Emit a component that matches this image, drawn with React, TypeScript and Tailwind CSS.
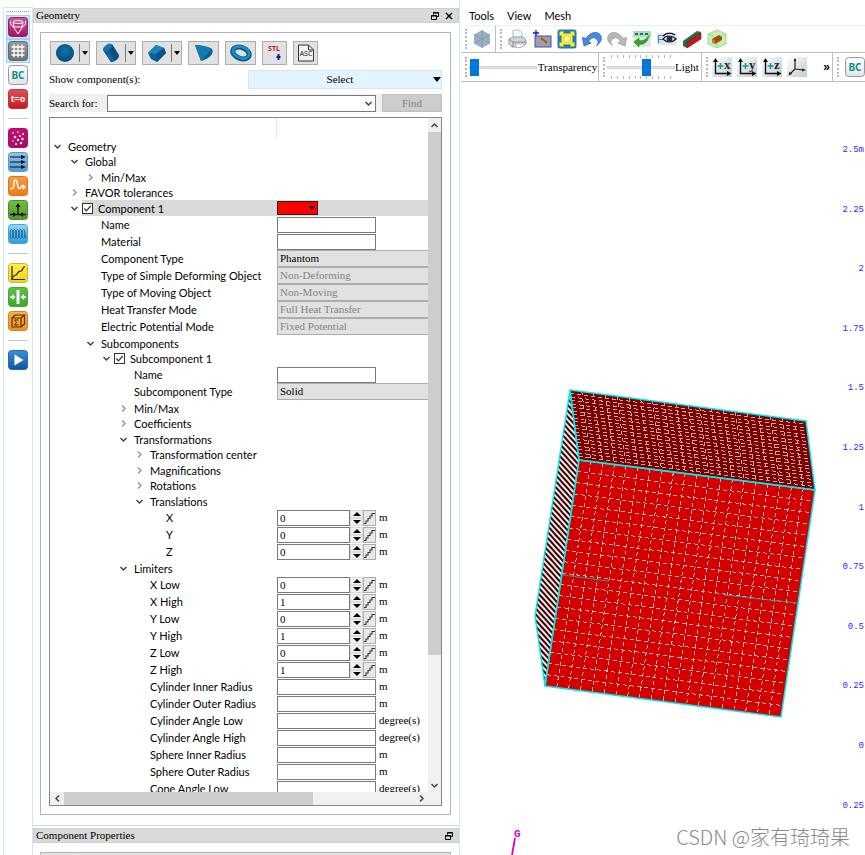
import { Fragment, type ReactNode } from "react";

type Editor = "text" | "combo" | "spin" | "color";

interface TreeRow {
  label: string;
  level: number;
  size: string;
  open?: boolean;
  checkbox?: boolean;
  selected?: boolean;
  editor?: Editor;
  value?: string;
  unit?: string;
  disabled?: boolean;
}

// left edge of the expander for each depth
const INDENT = ["pl-[3px]", "pl-[20px]", "pl-[36px]", "pl-[52px]", "pl-[69px]", "pl-[85px]", "pl-[101px]"];

const A = "h-[15px]";
const B = "h-[16px]";
const E = "h-[17px]";

const rows: TreeRow[] = [
  { label: "Geometry", level: 0, size: B, open: true },
  { label: "Global", level: 1, size: A, open: true },
  { label: "Min/Max", level: 2, size: B, open: false },
  { label: "FAVOR tolerances", level: 1, size: A, open: false },
  { label: "Component 1", level: 1, size: B, open: true, checkbox: true, selected: true, editor: "color" },
  { label: "Name", level: 2, size: E, editor: "text" },
  { label: "Material", level: 2, size: E, editor: "text" },
  { label: "Component Type", level: 2, size: E, editor: "combo", value: "Phantom" },
  { label: "Type of Simple Deforming Object", level: 2, size: E, editor: "combo", value: "Non-Deforming", disabled: true },
  { label: "Type of Moving Object", level: 2, size: E, editor: "combo", value: "Non-Moving", disabled: true },
  { label: "Heat Transfer Mode", level: 2, size: E, editor: "combo", value: "Full Heat Transfer", disabled: true },
  { label: "Electric Potential Mode", level: 2, size: E, editor: "combo", value: "Fixed Potential", disabled: true },
  { label: "Subcomponents", level: 2, size: B, open: true },
  { label: "Subcomponent 1", level: 3, size: A, open: true, checkbox: true },
  { label: "Name", level: 4, size: E, editor: "text" },
  { label: "Subcomponent Type", level: 4, size: E, editor: "combo", value: "Solid" },
  { label: "Min/Max", level: 4, size: B, open: false },
  { label: "Coefficients", level: 4, size: A, open: false },
  { label: "Transformations", level: 4, size: B, open: true },
  { label: "Transformation center", level: 5, size: A, open: false },
  { label: "Magnifications", level: 5, size: B, open: false },
  { label: "Rotations", level: 5, size: A, open: false },
  { label: "Translations", level: 5, size: B, open: true },
  { label: "X", level: 6, size: E, editor: "spin", value: "0", unit: "m" },
  { label: "Y", level: 6, size: E, editor: "spin", value: "0", unit: "m" },
  { label: "Z", level: 6, size: E, editor: "spin", value: "0", unit: "m" },
  { label: "Limiters", level: 4, size: B, open: true },
  { label: "X Low", level: 5, size: E, editor: "spin", value: "0", unit: "m" },
  { label: "X High", level: 5, size: E, editor: "spin", value: "1", unit: "m" },
  { label: "Y Low", level: 5, size: E, editor: "spin", value: "0", unit: "m" },
  { label: "Y High", level: 5, size: E, editor: "spin", value: "1", unit: "m" },
  { label: "Z Low", level: 5, size: E, editor: "spin", value: "0", unit: "m" },
  { label: "Z High", level: 5, size: E, editor: "spin", value: "1", unit: "m" },
  { label: "Cylinder Inner Radius", level: 5, size: E, editor: "text", unit: "m" },
  { label: "Cylinder Outer Radius", level: 5, size: E, editor: "text", unit: "m" },
  { label: "Cylinder Angle Low", level: 5, size: E, editor: "text", unit: "degree(s)" },
  { label: "Cylinder Angle High", level: 5, size: E, editor: "text", unit: "degree(s)" },
  { label: "Sphere Inner Radius", level: 5, size: E, editor: "text", unit: "m" },
  { label: "Sphere Outer Radius", level: 5, size: E, editor: "text", unit: "m" },
  { label: "Cone Angle Low", level: 5, size: E, editor: "text", unit: "degree(s)" },
];

const SERIF = "font-['Liberation_Serif','Noto_Sans_CJK_SC',serif] text-[11px]";

function Chevron({ dir, className = "text-[#444]" }: { dir: "up" | "down" | "left" | "right"; className?: string }) {
  const d = {
    up: "M1.5 6 4.5 3l3 3",
    down: "M1.5 3 4.5 6l3-3",
    left: "M6 1.5 3 4.5l3 3",
    right: "M3 1.5 6 4.5l-3 3",
  }[dir];
  return (
    <svg viewBox="0 0 9 9" className={`h-[9px] w-[9px] shrink-0 ${className}`} fill="none" stroke="currentColor" strokeWidth="1.5">
      <path d={d} />
    </svg>
  );
}

function Caret({ className = "" }: { className?: string }) {
  return (
    <svg viewBox="0 0 8 5" className={`h-[5px] w-2 shrink-0 ${className}`}>
      <path d="M0 0h8L4 5z" />
    </svg>
  );
}

function CheckBox({ id }: { id: string }) {
  return (
    <span className="relative h-[11px] w-[11px] shrink-0">
      <input id={id} type="checkbox" defaultChecked className="block h-[11px] w-[11px] appearance-none border border-[#333] bg-white" />
      <svg viewBox="0 0 11 11" className="pointer-events-none absolute inset-0" fill="none" stroke="#333" strokeWidth="1.2">
        <path d="M2.3 5.5l2.2 2.3 4.2-4.8" />
      </svg>
    </span>
  );
}

function RowEditor({ row, id }: { row: TreeRow; id: string }) {
  if (row.editor === "color") {
    return (
      <button aria-label="Component color" className="flex h-[14px] w-[41px] items-center justify-end border border-[#222] bg-[#ff0000] pr-0.5">
        <svg viewBox="0 0 6 4" className="h-1 w-1.5">
          <path d="M0 0h6L3 4z" />
        </svg>
      </button>
    );
  }
  if (row.editor === "combo") {
    return (
      <select
        id={id}
        disabled={row.disabled}
        className="h-[17px] w-full appearance-none border-y border-l border-[#adadad] bg-[#e1e1e1] pl-0.5 text-black opacity-100 disabled:text-[#838383]"
      >
        <option>{row.value}</option>
      </select>
    );
  }
  if (row.editor === "spin") {
    return (
      <>
        <input id={id} defaultValue={row.value} className="h-4 w-[73px] border border-[#7a7a7a] bg-white px-0.5" />
        <span className="flex h-4 w-[13px] flex-col bg-[#f0f0f0]">
          <button aria-label={`${row.label} up`} className="flex flex-1 items-center justify-center border border-[#dcdcdc]">
            <svg viewBox="0 0 8 4" className="h-1 w-2"><path d="M0 4h8L4 0z" /></svg>
          </button>
          <button aria-label={`${row.label} down`} className="flex flex-1 items-center justify-center border border-[#dcdcdc]">
            <svg viewBox="0 0 8 4" className="h-1 w-2"><path d="M0 0h8L4 4z" /></svg>
          </button>
        </span>
        <button aria-label={`${row.label} step`} className="h-4 w-[13px] border border-[#adadad] bg-[#e8e8e8]">
          <svg viewBox="0 0 11 14" className="h-3.5 w-[11px]" fill="none" stroke="#333" strokeWidth="1.1">
            <path d="M0 12.5h2v-2.500h2v-2.500h2v-2.500h2v-2.500h3" />
          </svg>
        </button>
        <span className="ml-[3px]">{row.unit}</span>
      </>
    );
  }
  if (row.editor === "text") {
    return (
      <>
        <input id={id} className="h-4 w-[99px] border border-[#7a7a7a] bg-white px-0.5" />
        <span className="ml-[3px]">{row.unit}</span>
      </>
    );
  }
  return null;
}

function Tree() {
  return (
    <ul className="min-w-0 flex-1">
      {rows.map((row, i) => {
        const id = `row-${i}`;
        const bg = row.selected ? "bg-[#d9d9d9]" : "";
        return (
          <li key={id} className={`flex ${row.size}`}>
            <div className={`flex w-[227px] shrink-0 items-center ${INDENT[row.level]}`}>
              {row.open === undefined ? (
                <span className="w-[9px] shrink-0" />
              ) : (
                <Chevron dir={row.open ? "down" : "right"} className={row.open ? "text-[#444]" : "text-[#999]"} />
              )}
              <div className={`ml-[3px] flex h-full flex-1 items-center ${bg}`}>
                {row.checkbox && <CheckBox id={`${id}-on`} />}
                <label
                  htmlFor={row.checkbox ? `${id}-on` : id}
                  className={`whitespace-nowrap ${row.checkbox ? "pl-[5px]" : "pl-[3px]"}`}
                >
                  {row.label}
                </label>
              </div>
            </div>
            <div className={`flex min-w-0 flex-1 items-center ${SERIF} ${bg}`}>
              <RowEditor row={row} id={id} />
            </div>
          </li>
        );
      })}
    </ul>
  );
}

/* ---------- left tool strip ---------- */

function Tile({ from, to, edge, children }: { from: string; to: string; edge: string; children?: ReactNode }) {
  const id = `g${from.slice(1)}${to.slice(1)}`;
  return (
    <svg viewBox="0 0 20 20" className="h-5 w-5">
      <defs>
        <linearGradient id={id} x1="0" y1="0" x2="0" y2="1">
          <stop offset="0" stopColor={from} />
          <stop offset="1" stopColor={to} />
        </linearGradient>
      </defs>
      <rect x="0.5" y="0.5" width="19" height="19" rx="3" fill={`url(#${id})`} stroke={edge} />
      {children}
    </svg>
  );
}

function BcTile() {
  return (
    <Tile from="#ffffff" to="#e2e2e2" edge="#9a9a9a">
      <text x="10" y="14" textAnchor="middle" fontFamily="'Noto Sans', sans-serif" fontSize="10" fontWeight="700" fill="#0f8f8c">BC</text>
    </Tile>
  );
}

const stripGroups: { name: string; active?: boolean; icon: ReactNode }[][] = [
  [
    {
      name: "Geometry",
      active: true,
      icon: (
        <Tile from="#d35a9c" to="#a8105f" edge="#8d2560">
          <g fill="none" stroke="#fff" strokeWidth="1">
            <ellipse cx="10" cy="5" rx="5" ry="1.500" />
            <path d="M2.500 4v3l3 3M17.500 4v3l-3 3M5 5l1 5M15 5l-1 5M5.500 10h9L10 17z" />
          </g>
        </Tile>
      ),
    },
    {
      name: "Meshing",
      active: true,
      icon: (
        <Tile from="#9b9b9b" to="#707070" edge="#666666">
          <path d="M6 3.500v13M10 3.500v13M14 3.500v13M3.500 6h13M3.500 10h13M3.500 14h13" stroke="#fff" strokeWidth="1.300" />
        </Tile>
      ),
    },
    { name: "Boundary conditions", icon: <BcTile /> },
    {
      name: "Initial conditions",
      icon: (
        <Tile from="#d9535a" to="#cf1519" edge="#b53a3d">
          <text x="10" y="13" textAnchor="middle" fontFamily="'Noto Sans', sans-serif" fontSize="9" fontWeight="700" fill="#fff">t=o</text>
        </Tile>
      ),
    },
  ],
  [
    {
      name: "Particles",
      icon: (
        <Tile from="#c21077" to="#a80b63" edge="#b00d6b">
          <g fill="#fff">
            <circle cx="5" cy="5" r="0.800" /><circle cx="10" cy="4" r="0.800" /><circle cx="15" cy="6" r="1" />
            <circle cx="7" cy="9" r="1.300" /><circle cx="12" cy="8" r="1" /><circle cx="14.500" cy="11" r="1.200" />
            <circle cx="10" cy="12" r="1.200" /><circle cx="5" cy="13" r="0.800" /><circle cx="8" cy="16" r="1" />
            <circle cx="13" cy="15" r="1.200" />
          </g>
        </Tile>
      ),
    },
    {
      name: "Flux surfaces",
      icon: (
        <Tile from="#8fc4f0" to="#4f9bdc" edge="#5b97c9">
          <path d="M2 5h13M2 10h13M2 15h13" stroke="#111" strokeWidth="1" />
          <path d="M13 3l5 2-5 2zM13 8l5 2-5 2zM13 13l5 2-5 2z" fill="#111" />
        </Tile>
      ),
    },
    {
      name: "Probes",
      icon: (
        <Tile from="#fb9a3c" to="#f07a12" edge="#d8771f">
          <path d="M2 12.500h2.500c2.500 0 0-8.500 3-8.500s1 8.500 4 8.500c1.500 0 1-2.500 2.500-2.500h2" fill="none" stroke="#fff" strokeWidth="1.600" />
          <path d="M14.500 8v6l3.500-3z" fill="#fff" />
        </Tile>
      ),
    },
    {
      name: "Sampling",
      icon: (
        <Tile from="#79bb49" to="#4e9a28" edge="#4f8a2f">
          <path d="M2 14.500h16M10 14V6" stroke="#111" strokeWidth="1.300" />
          <path d="M7.500 7 10 3l2.500 4zM5 12v5l3-2.500zM15 12v5l-3-2.500z" fill="#111" />
        </Tile>
      ),
    },
    {
      name: "Springs",
      icon: (
        <Tile from="#8fd8f8" to="#2f9ad6" edge="#4fa5cf">
          <g fill="none" stroke="#0c5f96" strokeWidth="0.900">
            <ellipse cx="3.500" cy="10" rx="1.500" ry="4.500" /><ellipse cx="6.500" cy="10" rx="1.500" ry="4.500" />
            <ellipse cx="9.500" cy="10" rx="1.500" ry="4.500" /><ellipse cx="12.500" cy="10" rx="1.500" ry="4.500" />
            <ellipse cx="15.500" cy="10" rx="1.500" ry="4.500" />
            <path d="M17 10c0 3 .5 4 1.500 4" />
          </g>
        </Tile>
      ),
    },
  ],
  [
    {
      name: "History plot",
      icon: (
        <Tile from="#fff04a" to="#f3d515" edge="#c9b52b">
          <path d="M4 3v13.500h13" fill="none" stroke="#222" strokeWidth="1.200" />
          <path d="M4.500 15.500c1-5 3.500-2 4.500-4.500s2-3 4-3 1-4 4-4.500" fill="none" stroke="#222" strokeWidth="1.200" />
        </Tile>
      ),
    },
    {
      name: "Split",
      icon: (
        <Tile from="#5cc244" to="#3aa827" edge="#44a832">
          <path d="M8.500 3h3v14h-3z" fill="#fff" />
          <path d="M2 9h2V7l3.500 3L4 13v-2H2zM18 9h-2V7l-3.500 3 3.500 3v-2h2z" fill="#fff" />
        </Tile>
      ),
    },
    {
      name: "Sum",
      icon: (
        <Tile from="#f8b04a" to="#ee8f1c" edge="#cf8526">
          <path d="M4 7h9v9H4zM4 7l3-3h9.500l-3.500 3M16.500 4v9L13 16" fill="none" stroke="#5a3206" strokeWidth="1.200" />
          <path d="M10.500 9H6.500l2 2.500-2 2.500h4" fill="none" stroke="#5a3206" strokeWidth="1" />
        </Tile>
      ),
    },
  ],
  [
    {
      name: "Run",
      icon: (
        <Tile from="#3d8fd8" to="#12559f" edge="#2c69a8">
          <path d="M6.500 4.500v11l9-5.500z" fill="#fff" />
        </Tile>
      ),
    },
  ],
];

function ToolStrip() {
  return (
    <aside className="w-[33px] shrink-0 pl-[3px] pt-[7px]">
      <div className="h-full border-x border-t border-[#cbe8f5] pt-[3px]">
        <div className="mx-auto h-1 w-[22px] border-t border-dotted border-[#999]" />
        {stripGroups.map((group, i) => (
          <Fragment key={i}>
            {i > 0 && (
              <div className="flex h-[15px] items-center">
                <hr className="mx-auto w-5 border-[#c8c8c8]" />
              </div>
            )}
            {group.map((tool) => (
              <button
                key={tool.name}
                aria-label={tool.name}
                className={`mx-auto flex h-6 w-6 items-center justify-center border ${
                  tool.active ? "border-[#99d1ff] bg-[#cce8ff]" : "border-transparent"
                }`}
              >
                {tool.icon}
              </button>
            ))}
          </Fragment>
        ))}
      </div>
    </aside>
  );
}

/* ---------- geometry dock ---------- */

function DockTitle({ title, closable }: { title: string; closable?: boolean }) {
  return (
    <header className={`flex h-[15px] shrink-0 items-center border border-[#cfcfcf] bg-[#d9d9d9] px-0.5 ${SERIF}`}>
      <h2 className="flex-1">{title}</h2>
      <button aria-label={`Float ${title}`} className="px-[3px]">
        <svg viewBox="0 0 8 8" className="h-2 w-2" fill="none" stroke="#000" strokeWidth="1">
          <path d="M2.500 2.500v-2h5v4h-2M2.500 1h5M.5 3.500h5v4h-5zM.5 4h5" />
        </svg>
      </button>
      {closable && (
        <button aria-label={`Close ${title}`} className="px-[3px]">
          <svg viewBox="0 0 8 8" className="h-2 w-2" stroke="#000" strokeWidth="1.400">
            <path d="M1 1l6 6M7 1L1 7" />
          </svg>
        </button>
      )}
    </header>
  );
}

function ShapeButton({ name, split, wide, children }: { name: string; split?: boolean; wide?: boolean; children: ReactNode }) {
  const width = split ? "w-[40px]" : wide ? "w-[31px]" : "w-[25px]";
  return (
    <button aria-label={name} className={`flex h-6 shrink-0 items-center border border-[#adadad] bg-[#e1e1e1] ${width}`}>
      <span className="flex h-full flex-1 items-center justify-center">{children}</span>
      {split && (
        <span className="flex h-[18px] w-2.5 items-center justify-center border-l border-[#777]">
          <svg viewBox="0 0 6 4" className="h-1 w-1.5"><path d="M0 0h6L3 4z" /></svg>
        </span>
      )}
    </button>
  );
}

function ShapeBar() {
  return (
    <div className="flex h-6 shrink-0 gap-1.5 pl-px">
      <ShapeButton name="Sphere" split>
        <svg viewBox="0 0 20 20" className="h-5 w-5">
          <defs>
            <radialGradient id="ball" cx="0.500" cy="0.400" r="0.600">
              <stop offset="0" stopColor="#0d76b3" />
              <stop offset="1" stopColor="#054a78" />
            </radialGradient>
          </defs>
          <circle cx="10" cy="10" r="9" fill="url(#ball)" />
        </svg>
      </ShapeButton>
      <ShapeButton name="Cylinder" split>
        <svg viewBox="0 0 20 20" className="h-5 w-5">
          <path d="M2 7 11 1l7 11c1 3-4 7-8 7z" fill="#064f80" />
          <path d="M2 7 6 4l8 14-4 1z" fill="#0a639b" />
          <ellipse cx="6.500" cy="4.500" rx="5" ry="2.800" transform="rotate(-35 6.500 4.500)" fill="#1276b0" />
        </svg>
      </ShapeButton>
      <ShapeButton name="Box" split>
        <svg viewBox="0 0 20 20" className="h-5 w-5">
          <path d="M1 10l8-8 8 3 2 5-9 9-6-3z" fill="#07629a" />
          <path d="M9 2l8 3-8 6-8-1z" fill="#1b82bb" />
          <path d="M17 5l2 5-9 9-1-8z" fill="#075585" />
        </svg>
      </ShapeButton>
      <ShapeButton name="Cone" wide>
        <svg viewBox="0 0 20 20" className="h-5 w-5">
          <path d="M1 2c5 0 12 1 17 4 2 4-1 9-11 12z" fill="#075f97" />
          <path d="M1 2c5 0 12 1 17 4L7 18z" fill="#137ab4" />
        </svg>
      </ShapeButton>
      <ShapeButton name="Torus" wide>
        <svg viewBox="0 0 24 20" className="h-5 w-6">
          <ellipse cx="12" cy="10" rx="8.500" ry="5.500" transform="rotate(20 12 10)" fill="none" stroke="#0a5c90" strokeWidth="5" />
          <ellipse cx="12" cy="9.500" rx="8.500" ry="5.500" transform="rotate(20 12 10)" fill="none" stroke="#1f8cc6" strokeWidth="2.500" />
        </svg>
      </ShapeButton>
      <ShapeButton name="Import STL">
        <svg viewBox="0 0 20 20" className="h-5 w-5">
          <text x="9" y="8" textAnchor="middle" fontFamily="'Noto Sans', sans-serif" fontSize="7" fontWeight="700" fill="#b01818">STL</text>
          <path d="M13.500 11v6M11.500 14h4" stroke="#1a1a9c" strokeWidth="2" />
        </svg>
      </ShapeButton>
      <ShapeButton name="Import ASC">
        <svg viewBox="0 0 20 20" className="h-5 w-5">
          <path d="M2.500 2h10l5 5v11h-15z" fill="#f2f2f2" stroke="#333" strokeWidth="1" />
          <path d="M12.500 2v5h5" fill="none" stroke="#333" strokeWidth="1" />
          <text x="10" y="13" textAnchor="middle" fontFamily="'Noto Sans', sans-serif" fontSize="7" fill="#222">ASC</text>
        </svg>
      </ShapeButton>
    </div>
  );
}

function GeometryDock() {
  return (
    <section className="flex min-h-0 flex-1 flex-col">
      <DockTitle title="Geometry" closable />
      <div className="mb-[10px] ml-[7px] mr-[8px] mt-[9px] flex min-h-0 flex-1 flex-col gap-[5px] border border-[#b4b4b4] p-[8px]">
        <ShapeBar />
        <div className={`flex h-[19px] shrink-0 items-center justify-between ${SERIF}`}>
          <label htmlFor="show">Show component(s):</label>
          <div className="relative h-full w-[194px]">
            <select id="show" className="h-full w-full appearance-none border border-[#cce8ff] bg-[#e5f3ff] pr-[10px] [text-align-last:center]">
              <option>Select</option>
            </select>
            <Caret className="pointer-events-none absolute right-px top-[7px]" />
          </div>
        </div>
        <div className={`flex h-[18px] shrink-0 items-center bg-[#f0f0f0] ${SERIF}`}>
          <label htmlFor="search" className="w-[58px]">Search for:</label>
          <div className="flex h-[17px] flex-1 items-center border border-[#7a7a7a] bg-white pr-0.5">
            <input id="search" className="h-full min-w-0 flex-1 px-1 outline-none" />
            <button aria-label="Search history"><Chevron dir="down" /></button>
          </div>
          <button className="ml-[6px] h-[18px] w-[60px] border border-[#bfbfbf] bg-[#cccccc] text-[#838383]">Find</button>
        </div>
        <div className="flex min-h-0 flex-1 flex-col border border-[#828790]">
          <div className="flex min-h-0 flex-1">
            <div className="min-w-0 flex-1 overflow-hidden">
              <div className="flex h-5">
                <span className="w-[227px] border-r border-[#e5e5e5]" />
              </div>
              <Tree />
            </div>
            <div className="flex w-[13px] shrink-0 flex-col items-center bg-[#f0f0f0]">
              <button aria-label="Scroll up" className="flex h-[14px] items-center"><Chevron dir="up" /></button>
              <div className="flex w-full flex-1 flex-col">
                <div className="h-[81%] bg-[#cdcdcd]" />
              </div>
              <button aria-label="Scroll down" className="flex h-[14px] items-center"><Chevron dir="down" /></button>
            </div>
          </div>
          <div className="flex h-[13px] shrink-0 items-center bg-[#f0f0f0] pr-[13px]">
            <button aria-label="Scroll left" className="flex w-[14px] justify-center"><Chevron dir="left" /></button>
            <div className="h-full flex-1">
              <div className="h-full w-[71%] bg-[#cdcdcd]" />
            </div>
            <button aria-label="Scroll right" className="flex w-[14px] justify-center"><Chevron dir="right" /></button>
          </div>
        </div>
      </div>
    </section>
  );
}

/* ---------- toolbars ---------- */

function Handle({ tight }: { tight?: boolean }) {
  return <span className={`ml-1 h-[20px] w-px shrink-0 border-l-2 border-dotted border-[#b8b8b8] ${tight ? "mr-0.5" : "mr-1"}`} />;
}

function Divider() {
  return <span className="h-full w-px shrink-0 bg-[#bdbdbd]" />;
}

function IconButton({ name, children }: { name: string; children: ReactNode }) {
  return (
    <button aria-label={name} className="flex h-[22px] w-[22px] shrink-0 items-center justify-center">
      <svg viewBox="0 0 20 20" className="h-5 w-5">{children}</svg>
    </button>
  );
}

function MainToolbar() {
  return (
    <div className="flex h-[28px] shrink-0 items-center border-b border-t border-b-[#bdbdbd] border-t-[#eeeeee] text-[#222]">
      <Handle />
      <IconButton name="Solid view">
        <path d="M10 1l8 4.500v9L10 19l-8-4.500v-9z" fill="#9ab2c0" />
        <path d="M10 1v18M2 5.500l16 9M18 5.500l-16 9" stroke="#7d97a6" strokeWidth="0.800" />
      </IconButton>
      <span className="w-0.5" />
      <Divider />
      <Handle />
      <div className="flex gap-[3px]">
        <IconButton name="Print">
          <path d="M6 9V1h6l3 3v5z" fill="#f4f9fd" stroke="#8fb4d0" strokeWidth="0.800" />
          <path d="M2 10l4-2h10l3 3v4l-5 3H5l-3-3z" fill="#d6d6d6" stroke="#888" strokeWidth="0.800" />
          <path d="M2 10l4 3h13M6 13v5" fill="none" stroke="#777" strokeWidth="0.800" />
          <path d="M8 15h8l2 2-8 2z" fill="#fff" stroke="#999" strokeWidth="0.600" />
        </IconButton>
        <IconButton name="New view">
          <rect x="3" y="7" width="16" height="11" fill="#9f9f9f" stroke="#4848d0" strokeWidth="1" />
          <path d="M9 9l6 5" stroke="#a35a10" strokeWidth="2" />
          <path d="M4 1v6M1 4h6" stroke="#1515c8" strokeWidth="1.300" />
        </IconButton>
        <IconButton name="Fit view">
          <rect x="0.500" y="0.500" width="19" height="19" rx="2.500" fill="#2178bb" />
          <path d="M2.500 2.500h4.500L6 4.500h8L13 2.500h4.500V7l-2-1v8l2-1v4.500H13l1-2H6l1 2H2.500V13l2 1V6l-2 1z" fill="#ffee28" />
          <rect x="7" y="7" width="6" height="6" fill="#fff9b0" stroke="#e0c81e" strokeWidth="0.800" />
        </IconButton>
        <IconButton name="Undo">
          <path d="M0.500 8.500 2 17l7-3-2.500-1.500c2-4 6-5 8.500-2 2 2.500 1 4-.5 6 5-3 6-8 3.500-11C15 2 8 3 4 9.500z" fill="#4c8be0" stroke="#245fb0" strokeWidth="0.800" />
        </IconButton>
        <IconButton name="Redo">
          <path d="M19.500 8.500 18 17l-7-3 2.500-1.500c-2-4-6-5-8.500-2-2 2.500-1 4 .5 6-5-3-6-8-3.500-11C5 2 12 3 16 9.500z" fill="#b9b9b9" stroke="#9a9a9a" strokeWidth="0.800" />
        </IconButton>
        <IconButton name="Apply">
          <rect x="1" y="2" width="18" height="16" fill="#e1e9e3" />
          <rect x="1" y="2" width="18" height="6" fill="#a9ddc0" />
          <path d="M3 5h3M8 5h3M13 5h3" stroke="#167a4c" strokeWidth="2.200" />
          <path d="M2 13l5-4v2.500c4 1 7-1 10-5-1 6-4 9-10 9V18z" fill="#35a52d" stroke="#24801f" strokeWidth="0.600" />
        </IconButton>
        <IconButton name="FAVOR view">
          <rect x="0" y="4" width="20" height="12" fill="#dfe7ec" />
          <text x="0" y="14" fontFamily="Liberation Sans, sans-serif" fontSize="11" fill="#2785b5">F</text>
          <path d="M6 10c3-4 9-4 13 0-4 4-9 4-13 0z" fill="#fff" stroke="#111" strokeWidth="1.200" />
          <circle cx="12.500" cy="10" r="3" fill="#1b3550" />
          <path d="M6 7c4-4 9-3 12-1" fill="none" stroke="#111" strokeWidth="1.300" />
        </IconButton>
        <IconButton name="Clip">
          <path d="M1 12 15 2l4 1v5L5 19l-4-2z" fill="#1f6d4c" />
          <path d="M5 13 19 4v6L5 19z" fill="#c5161b" stroke="#841014" strokeWidth="0.600" />
        </IconButton>
        <IconButton name="Bounding box">
          <path d="M1 5l9-4 9 4v10l-9 4-9-4z" fill="#c7efb4" stroke="#93d27c" strokeWidth="0.800" />
          <path d="M1 5l9 4 9-4M10 9v10" fill="none" stroke="#93d27c" strokeWidth="0.800" />
          <path d="M5 10l7-4 3 2v3l-7 4-3-1.500z" fill="#a34a19" />
          <path d="M5 10l3 1.500v3.500l-3-1.500z" fill="#d07a2b" />
        </IconButton>
      </div>
    </div>
  );
}

const RANGE =
  "block h-[18px] w-full appearance-none bg-transparent [&::-webkit-slider-runnable-track]:h-[3px] [&::-webkit-slider-runnable-track]:border [&::-webkit-slider-runnable-track]:border-[#d0d0d0] [&::-webkit-slider-runnable-track]:bg-[#e7eaea] [&::-webkit-slider-thumb]:-mt-2 [&::-webkit-slider-thumb]:h-[17px] [&::-webkit-slider-thumb]:w-[9px] [&::-webkit-slider-thumb]:appearance-none [&::-webkit-slider-thumb]:bg-[#0078d7]";

function Ticks() {
  return (
    <div className="flex justify-between px-1">
      {Array.from({ length: 11 }, (_, i) => (
        <span key={i} className="h-[3px] w-px bg-[#b9b9a8]" />
      ))}
    </div>
  );
}

function AxisButton({ axis }: { axis?: string }) {
  return (
    <button aria-label={axis ? `View +${axis}` : "Isometric view"} className="h-5 w-5 shrink-0 bg-linear-to-br from-[#ffffff] to-[#c3cace]">
      <svg viewBox="0 0 20 20" className="h-5 w-5">
        {axis ? (
          <>
            <path d="M3.500 3v13.500H17" fill="none" stroke="#111" strokeWidth="1.400" />
            <path d="M1 5l2.500-4L6 5zM15 14l4.500 2.500L15 19z" fill="#111" />
            <path d="M8.500 6v6M5.500 9h6" stroke="#0e9a9a" strokeWidth="1.600" />
            <text x="12" y="12" fontFamily="Liberation Serif, serif" fontSize="13" fontWeight="700" fill="#222">{axis}</text>
          </>
        ) : (
          <>
            <path d="M8 2v10l9 1M8 12l-5 5" fill="none" stroke="#222" strokeWidth="1.200" />
            <path d="M6.500 4 8 1l1.500 3zM15 11.500l4 1.500-4 1.500zM1.500 18.500l1-4 2.500 2.500z" fill="#222" />
          </>
        )}
      </svg>
    </button>
  );
}

function ViewToolbar() {
  return (
    <div className={`flex h-[29px] shrink-0 items-center overflow-hidden border-b border-[#bdbdbd] ${SERIF}`}>
      <Handle tight />
      <input id="transparency" type="range" defaultValue={0} className={`${RANGE} max-w-[68px]`} />
      <label htmlFor="transparency" className="w-[61px] shrink-0 text-center">Transparency</label>
      <Divider />
      <Handle tight />
      <div className="w-[68px] shrink-0">
        <Ticks />
        <input id="light" type="range" defaultValue={60} className={RANGE} />
        <Ticks />
      </div>
      <label htmlFor="light" className="w-[26px] shrink-0">Light</label>
      <Divider />
      <Handle />
      <div className="flex gap-[5px]">
        <AxisButton axis="x" />
        <AxisButton axis="y" />
        <AxisButton axis="z" />
        <AxisButton />
      </div>
      <button aria-label="More tools" className="ml-auto pr-0.5 font-['Liberation_Sans',sans-serif] text-[12px] font-bold">»</button>
      <Divider />
      <Handle />
      <button aria-label="Boundary conditions" className="ml-0.5 shrink-0"><BcTile /></button>
    </div>
  );
}

/* ---------- 3D view ---------- */

type Pt = [number, number];
const mix = (a: Pt, b: Pt, t: number): Pt => [a[0] + (b[0] - a[0]) * t, a[1] + (b[1] - a[1]) * t];
const pts = (...p: Pt[]) => p.map((q) => q.join(",")).join(" ");

function Grid({ a, b, c, d, n, dash, color }: { a: Pt; b: Pt; c: Pt; d: Pt; n: number; dash: string; color: string }) {
  const lines: [Pt, Pt][] = [];
  for (let i = 1; i < n; i++) {
    lines.push([mix(a, b, i / n), mix(d, c, i / n)]);
    lines.push([mix(a, d, i / n), mix(b, c, i / n)]);
  }
  return (
    <g stroke={color} strokeWidth="1" strokeDasharray={dash} shapeRendering="crispEdges">
      {lines.map(([p, q], i) => (
        <line key={i} x1={p[0]} y1={p[1]} x2={q[0]} y2={q[1]} />
      ))}
    </g>
  );
}

const FTL: Pt = [579, 460];
const FTR: Pt = [815, 490];
const FBR: Pt = [781, 717];
const FBL: Pt = [545, 686];
const BTL: Pt = [570, 390];
const BTR: Pt = [806, 421];
const BBL: Pt = [535, 616];

const ticks = ["2.5m", "2.25", "2", "1.75", "1.5", "1.25", "1", "0.75", "0.5", "0.25", "0", "0.25"];

function Viewport() {
  return (
    <div className="relative min-h-0 flex-1 overflow-hidden">
      <svg viewBox="461 82 404 773" preserveAspectRatio="xMaxYMin slice" className="h-full w-full">
        <defs>
          <pattern id="hatch" width="4" height="4" patternUnits="userSpaceOnUse" patternTransform="rotate(48)">
            <rect width="4" height="4" fill="#f2e6e6" />
            <rect width="4" height="2" fill="#3a0505" />
          </pattern>
        </defs>
        <polygon points={pts(FTL, FTR, FBR, FBL)} fill="#d40000" />
        <Grid a={FTL} b={FTR} c={FBR} d={FBL} n={20} dash="4 3" color="#e0b4b4" />
        <polygon points={pts(BTL, BTR, FTR, FTL)} fill="#7d0000" />
        <Grid a={BTL} b={BTR} c={FTR} d={FTL} n={20} dash="4 3" color="#c9a5a5" />
        <polygon points={pts(BTL, FTL, FBL, BBL)} fill="url(#hatch)" />
        <g fill="none" stroke="#00eaea" strokeWidth="1.500">
          <polygon points={pts(BTL, BTR, FTR, FTL)} />
          <polygon points={pts(FTL, FTR, FBR, FBL)} />
          <polygon points={pts(BTL, FTL, FBL, BBL)} />
        </g>
        <path d="M563 575l45 6M724 595l74 8" stroke="#2f9a9a" strokeWidth="1" fill="none" />
        <g fontFamily="Liberation Mono, monospace" fontSize="9" fill="#2a2aff" textAnchor="end">
          {ticks.map((t, i) => (
            <text key={i} x="864" y={152 + Math.round(i * 59.6)}>{t}</text>
          ))}
        </g>
        <path d="M515 838l-3 17" stroke="#d400d4" strokeWidth="1.800" />
        <text x="514" y="837" fontFamily="Liberation Mono, monospace" fontSize="11" fontWeight="700" fill="#d400d4">G</text>
      </svg>
      <p className="absolute bottom-1.5 right-[15px] whitespace-nowrap font-['Noto_Sans_CJK_SC',sans-serif] text-[20px] font-light leading-6 text-[#8a8a8a]">
        CSDN @家有琦琦果
      </p>
    </div>
  );
}

export default function App() {
  return (
    <div className="flex h-screen overflow-hidden bg-white font-['Lato','Noto_Sans_CJK_SC',sans-serif] text-[11px] leading-[15px] text-black">
      <ToolStrip />
      <div className="flex w-[427px] shrink-0 flex-col border-r border-[#cbe8f5] pt-[8px]">
        <GeometryDock />
        <section className="h-[30px] shrink-0 border-t border-[#b5deee] pt-[2px]">
          <DockTitle title="Component Properties" />
          <div className="ml-[7px] mr-[8px] mt-[9px] h-3 border border-[#b4b4b4] bg-[#e3e3e3]" />
        </section>
      </div>
      <main className="flex min-w-0 flex-1 flex-col pl-px">
        <nav className="flex h-[25px] shrink-0 gap-[13px] pl-2 pt-[7px]">
          <button className="h-4">Tools</button>
          <button className="h-4">View</button>
          <button className="h-4">Mesh</button>
        </nav>
        <MainToolbar />
        <ViewToolbar />
        <Viewport />
      </main>
    </div>
  );
}
